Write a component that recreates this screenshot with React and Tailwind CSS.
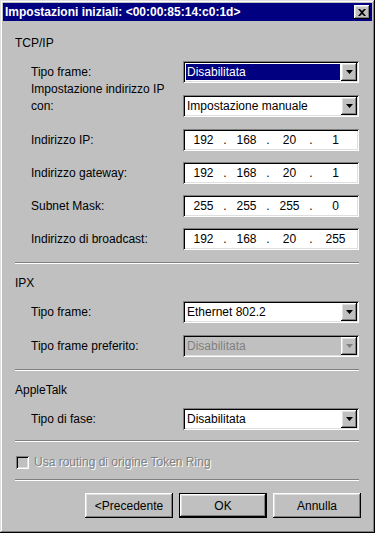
import React from "react";

const raised = "shadow-[inset_-1px_-1px_#000,inset_1px_1px_#fff,inset_-2px_-2px_#808080,inset_2px_2px_#dfdfdf]";
const sunken = "shadow-[inset_1px_1px_#808080,inset_-1px_-1px_#fff,inset_2px_2px_#000,inset_-2px_-2px_#dfdfdf]";

function Arrow({ color = "#000" }) {
    return (
        <svg width="7" height="4" viewBox="0 0 7 4">
            <path d="M0 0h7L3.5 4z" fill={color} />
        </svg>
    );
}

function Combo({ value, selected, disabled }) {
    return (
        <div className={`w-[176px] h-[22px] p-[2px] flex ${sunken} ${disabled ? "bg-[#c0c0c0] text-[#808080]" : "bg-white"}`}>
            <div className="flex-1 flex p-[1px]">
                <span className={`flex-1 flex items-center pl-[1px] ${selected ? "bg-[#000080] text-white" : ""}`}>{value}</span>
            </div>
            <div className={`w-[16px] h-full bg-[#c0c0c0] flex items-center justify-center ${raised}`}>
                <Arrow color={disabled ? "#808080" : "#000"} />
            </div>
        </div>
    );
}

function IpBox({ parts }) {
    return (
        <div className={`w-[176px] h-[22px] p-[2px] bg-white flex items-center ${sunken}`}>
            {parts.map((p, i) => (
                <div className="flex-1 flex items-center" key={i}>
                    <span className="flex-1 text-center">{p}</span>
                    {i < 3 && <span className="w-[6px] text-center">.</span>}
                </div>
            ))}
        </div>
    );
}

function Row({ label, children, className = "" }) {
    return (
        <div className={`flex items-center h-[22px] ${className}`}>
            <div className="w-[168px] pl-[16px]">{label}</div>
            {children}
        </div>
    );
}

function Sep({ className = "" }) {
    return <div className={`h-[2px] border-t border-[#808080] border-b border-b-white ${className}`} />;
}

function Btn({ label, def }) {
    if (def) {
        return (
            <div className="w-[88px] h-[25px] border border-black">
                <button className={`w-full h-full bg-[#c0c0c0] ${raised}`}>{label}</button>
            </div>
        );
    }
    return <button className={`w-[88px] h-[25px] bg-[#c0c0c0] ${raised}`}>{label}</button>;
}

export default function App() {
    return (
        <div
            className="w-[375px] h-[533px] bg-[#c0c0c0] p-[3px] text-[12px] leading-[14px] text-black shadow-[inset_-1px_-1px_#000,inset_1px_1px_#dfdfdf,inset_-2px_-2px_#808080,inset_2px_2px_#fff]"
            style={{ fontFamily: '"Liberation Sans", Arial, sans-serif' }}
        >
            <div className="h-[18px] bg-[#000080] flex items-center justify-between pl-[2px] pr-[2px]">
                <span className="text-white font-bold">Impostazioni iniziali: &lt;00:00:85:14:c0:1d&gt;</span>
                <button className={`w-[16px] h-[14px] bg-[#c0c0c0] flex items-center justify-center ${raised}`}>
                    <svg width="8" height="7" viewBox="0 0 8 7">
                        <path d="M0 0h2l2 2 2-2h2L5 3.5 8 7H6L4 5 2 7H0l3-3.5z" fill="#000" />
                    </svg>
                </button>
            </div>

            <div className="pl-[12px] pr-[13px]">
                <div className="mt-[15px] h-[14px]">TCP/IP</div>
                <Row label="Tipo frame:" className="mt-[11px]">
                    <Combo value="Disabilitata" selected />
                </Row>
                <div className="flex items-start h-[22px] mt-[12px]">
                    <div className="w-[168px] pl-[16px] leading-[17px] -mt-[14px]">
                        Impostazione indirizzo IP<br />con:
                    </div>
                    <Combo value="Impostazione manuale" />
                </div>
                <Row label="Indirizzo IP:" className="mt-[12px]">
                    <IpBox parts={["192", "168", "20", "1"]} />
                </Row>
                <Row label="Indirizzo gateway:" className="mt-[11px]">
                    <IpBox parts={["192", "168", "20", "1"]} />
                </Row>
                <Row label="Subnet Mask:" className="mt-[11px]">
                    <IpBox parts={["255", "255", "255", "0"]} />
                </Row>
                <Row label="Indirizzo di broadcast:" className="mt-[11px]">
                    <IpBox parts={["192", "168", "20", "255"]} />
                </Row>
                <Sep className="mt-[12px]" />

                <div className="mt-[12px] h-[14px]">IPX</div>
                <Row label="Tipo frame:" className="mt-[11px]">
                    <Combo value="Ethernet 802.2" />
                </Row>
                <Row label="Tipo frame preferito:" className="mt-[12px]">
                    <Combo value="Disabilitata" disabled />
                </Row>
                <Sep className="mt-[12px]" />

                <div className="mt-[12px] h-[14px]">AppleTalk</div>
                <Row label="Tipo di fase:" className="mt-[11px]">
                    <Combo value="Disabilitata" />
                </Row>
                <Sep className="mt-[10px]" />

                <div className="mt-[13px] h-[14px] flex items-center gap-[5px] pl-[1px]">
                    <div className={`w-[13px] h-[13px] bg-[#c0c0c0] ${sunken}`} />
                    <span className="text-[#808080] [text-shadow:1px_1px_#fff]">Usa routing di origine Token Ring</span>
                </div>
                <Sep className="mt-[10px]" />

                <div className="mt-[12px] flex justify-end gap-[6px] -mr-[2px]">
                    <Btn label="<Precedente" />
                    <Btn label="OK" def />
                    <Btn label="Annulla" />
                </div>
            </div>
        </div>
    );
}
